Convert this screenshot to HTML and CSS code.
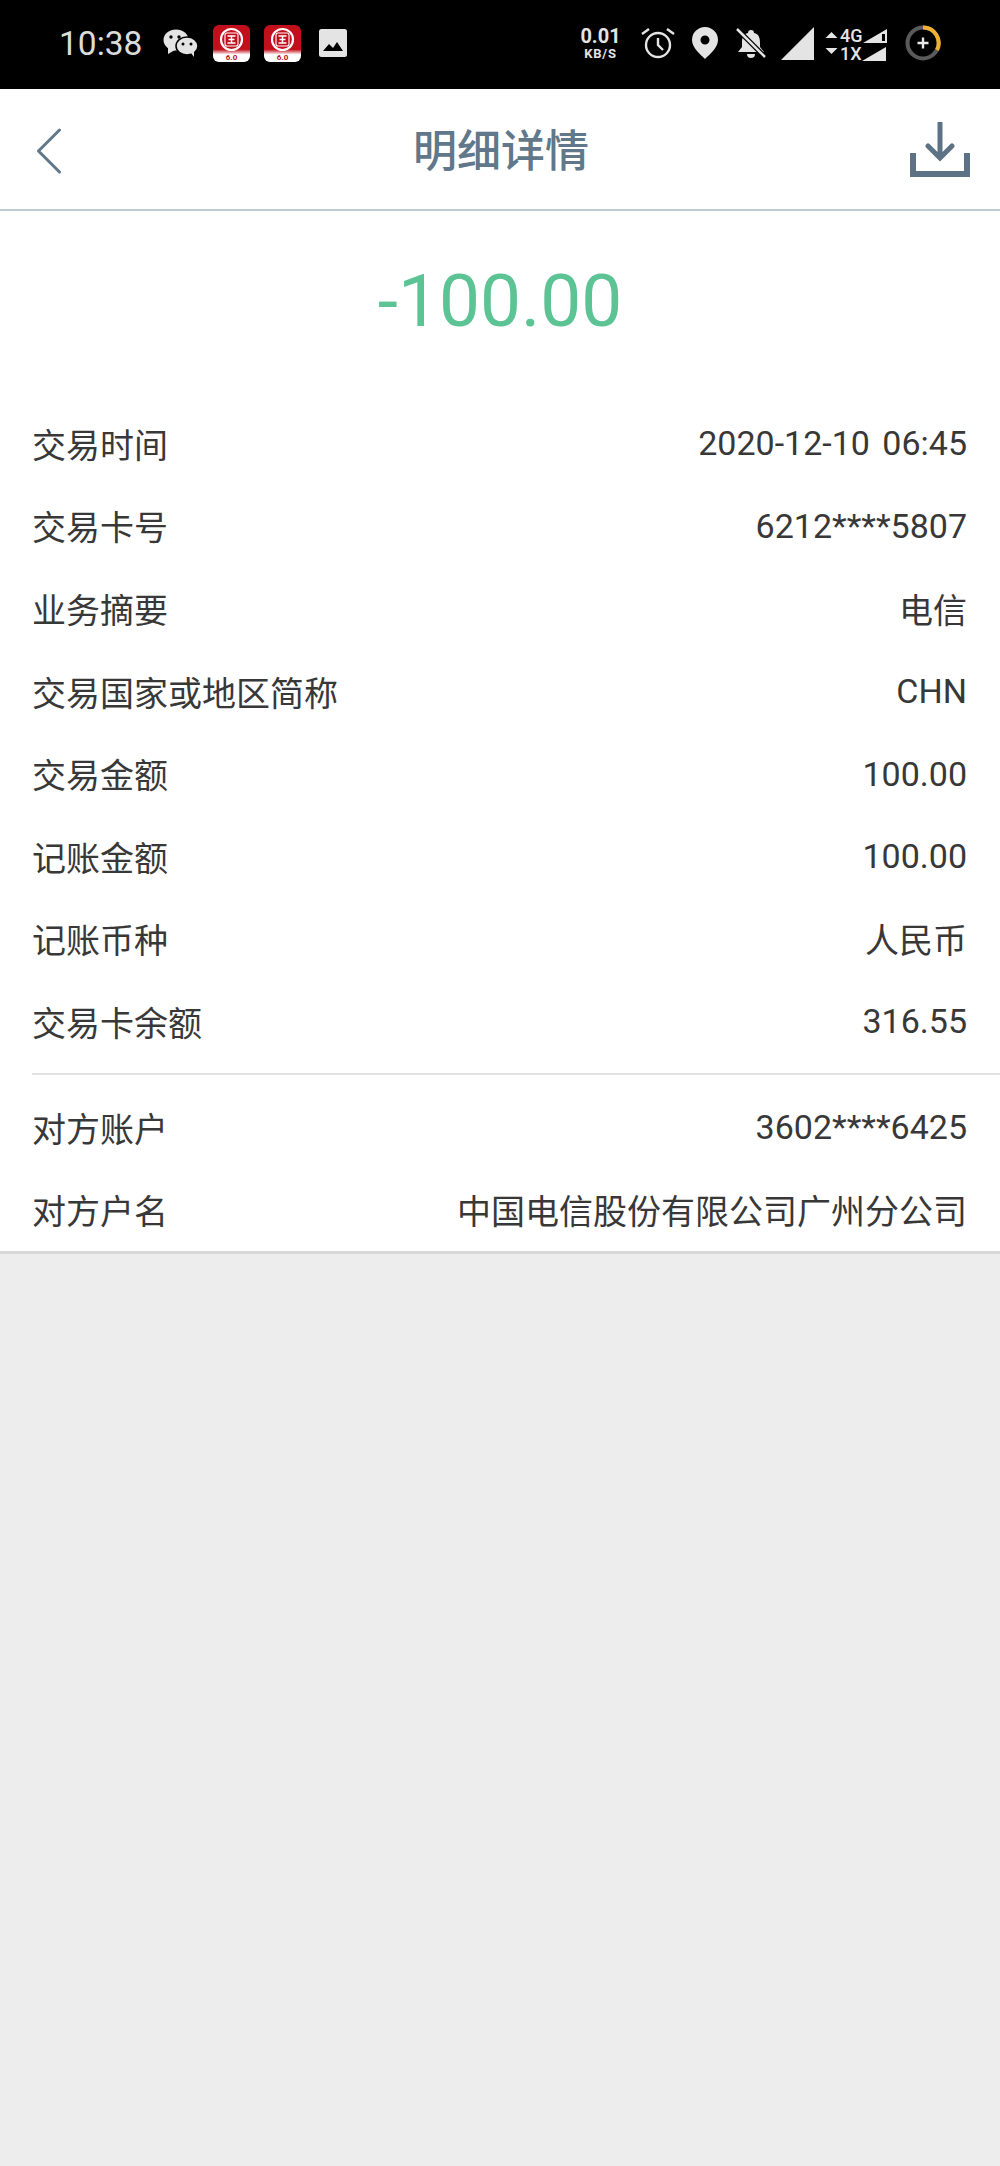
FILE: index.html
```html
<!DOCTYPE html>
<html lang="zh-CN">
<head>
<meta charset="utf-8">
<title>明细详情</title>
<link rel="stylesheet" href="styles.css">
</head>
<body>
<div class="status">
  <div class="status-left">
    <span class="clock">10:38</span>
    <svg class="ic-wechat" viewBox="0 0 35 28"><ellipse cx="13" cy="11" rx="12.500" ry="10.500" fill="#e4e4e4"/><path d="M5 18l0 7 7-4z" fill="#e4e4e4"/><ellipse cx="24" cy="17" rx="11" ry="9" fill="#e4e4e4" stroke="#000" stroke-width="1.500"/><path d="M28 24l3 4 0-6z" fill="#e4e4e4"/><circle cx="8" cy="8" r="1.700" fill="#000"/><circle cx="16" cy="8" r="1.700" fill="#000"/><circle cx="20" cy="15" r="1.500" fill="#000"/><circle cx="28" cy="15" r="1.500" fill="#000"/></svg>
    <svg class="ic-bank" viewBox="0 0 37 37"><defs><linearGradient id="g1" x1="0" y1="0" x2="0" y2="1"><stop offset="0.66" stop-color="#c10f1b"/><stop offset="0.8" stop-color="#fff"/></linearGradient></defs><rect width="37" height="37" rx="6" fill="url(#g1)"/><circle cx="18.500" cy="14.500" r="10.500" fill="none" stroke="#fff" stroke-width="2.200"/><rect x="12" y="8" width="13" height="13" rx="2" fill="none" stroke="#fff" stroke-width="1.100"/><path d="M14.500 11h8M14.500 18h8M18.500 11v7M15.500 14.500h6" stroke="#fff" stroke-width="1.500" fill="none"/><text x="18.500" y="35" class="bank-ver">6.0</text></svg>
    <svg class="ic-bank" viewBox="0 0 37 37"><rect width="37" height="37" rx="6" fill="url(#g1)"/><circle cx="18.500" cy="14.500" r="10.500" fill="none" stroke="#fff" stroke-width="2.200"/><rect x="12" y="8" width="13" height="13" rx="2" fill="none" stroke="#fff" stroke-width="1.100"/><path d="M14.500 11h8M14.500 18h8M18.500 11v7M15.500 14.500h6" stroke="#fff" stroke-width="1.500" fill="none"/><text x="18.500" y="35" class="bank-ver">6.0</text></svg>
    <svg class="ic-photo" viewBox="0 0 28 28"><rect width="28" height="28" rx="2.500" fill="#e4e4e4"/><path d="M4 22l6-7 4 4 4-6 6 9z" fill="#000"/></svg>
  </div>
  <div class="status-right">
    <div class="speed"><b>0.01</b><small>KB/S</small></div>
    <svg class="ic-alarm" viewBox="0 0 34 32"><circle cx="17" cy="18" r="12" fill="none" stroke="#e4e4e4" stroke-width="2.400"/><path d="M17 11v7l5 5M1 7l7-5M33 7l-7-5" fill="none" stroke="#e4e4e4" stroke-width="2.400"/></svg>
    <svg class="ic-pin" viewBox="0 0 26 32"><path fill-rule="evenodd" d="M13 0a13 13 0 0 1 13 13c0 8-9 15-13 19C9 28 0 21 0 13A13 13 0 0 1 13 0zm0 8.500a4.500 4.500 0 1 0 0 9 4.500 4.500 0 0 0 0-9z" fill="#e4e4e4"/></svg>
    <svg class="ic-bell" viewBox="0 0 30 30"><path d="M15 2a3 3 0 0 1 3 3c5 1 6 5 6 10v4l4 5H2l4-5v-4c0-5 1-9 6-10a3 3 0 0 1 3-3zM11 26h8a4 4 0 0 1-8 0z" fill="#e4e4e4"/><path d="M1 1l28 28" stroke="#000" stroke-width="5"/><path d="M1 1l28 28" stroke="#e4e4e4" stroke-width="2.500"/></svg>
    <svg class="ic-signal" viewBox="0 0 33 33"><path d="M33 0v33H0z" fill="#e4e4e4"/></svg>
    <div class="arrows"><svg class="ic-updown" viewBox="0 0 12 22"><path d="M6 0l6 6H0zM0 16h12l-6 6z" fill="#e4e4e4"/></svg></div>
    <div class="dual">
      <div class="dual-row"><span>4G</span><svg class="ic-mini" viewBox="0 0 24 14"><path fill-rule="evenodd" d="M24 0v14H0zM19 5v7h3V5z" fill="#e4e4e4"/></svg></div>
      <div class="dual-row"><span>1X</span><svg class="ic-mini" viewBox="0 0 24 14"><path d="M24 0v14H0z" fill="#e4e4e4"/></svg></div>
    </div>
    <svg class="ic-ring" viewBox="0 0 36 36"><circle cx="18" cy="18" r="15.500" fill="none" stroke="#5a5a5a" stroke-width="4"/><path d="M18 2.500A15.500 15.500 0 0 1 32 25" fill="none" stroke="#f0b030" stroke-width="4"/><path d="M18 12.500v11M12.500 18h11" stroke="#e8e8e8" stroke-width="2.400"/></svg>
  </div>
</div>

<header class="nav">
  <svg class="ic-back" viewBox="0 0 26 46"><path d="M24 2L3 23l21 21" fill="none" stroke="#60788a" stroke-width="3" stroke-linecap="round" stroke-linejoin="round"/></svg>
  <h1 class="nav-title">明细详情</h1>
  <svg class="ic-download" viewBox="0 0 60 56"><path d="M30 1v34M18 24l12 12 12-12" fill="none" stroke="#5d7284" stroke-width="5" stroke-linecap="round"/><path d="M3 31v21h54V31" fill="none" stroke="#5d7284" stroke-width="6"/></svg>
</header>

<main class="card">
  <div class="amount">-100.00</div>
  <div class="rows">
    <div class="row"><span>交易时间</span><span>2020-12-10 06:45</span></div>
    <div class="row"><span>交易卡号</span><span>6212****5807</span></div>
    <div class="row"><span>业务摘要</span><span>电信</span></div>
    <div class="row"><span>交易国家或地区简称</span><span>CHN</span></div>
    <div class="row"><span>交易金额</span><span>100.00</span></div>
    <div class="row"><span>记账金额</span><span>100.00</span></div>
    <div class="row"><span>记账币种</span><span>人民币</span></div>
    <div class="row"><span>交易卡余额</span><span>316.55</span></div>
  </div>
  <div class="rows rows-second">
    <div class="row"><span>对方账户</span><span>3602****6425</span></div>
    <div class="row"><span>对方户名</span><span>中国电信股份有限公司广州分公司</span></div>
  </div>
</main>
</body>
</html>
```
FILE: styles.css
```css
* { box-sizing: border-box; margin: 0; padding: 0; }
html, body { height: 100%; }
body {
  background: #ededed;
  font-family: Roboto, "Noto Sans CJK SC", sans-serif;
  overflow: hidden;
}
.status {
  height: 89px;
  background: #000;
  display: flex;
  justify-content: space-between;
  align-items: center;
  padding: 0 59px 3px 59px;
  color: #e4e4e4;
}
.status-left, .status-right { display: flex; align-items: center; }
.clock { font-size: 33.500px; color: #dcdcdc; margin-right: 21px; }
.ic-wechat { width: 35px; height: 28px; margin-right: 15px; }
.ic-bank { width: 37px; height: 37px; margin-right: 14px; }
.bank-ver { font-size: 8px; font-weight: 700; fill: #c10f1b; text-anchor: middle; }
.ic-photo { width: 28px; height: 28px; margin-left: 4px; }
.speed { display: flex; flex-direction: column; align-items: center; line-height: 1; margin-right: 22px; width: 37px; }
.speed b { font-size: 20px; font-weight: 700; }
.speed small { font-size: 13px; font-weight: 700; letter-spacing: 0.8px; margin-top: 1px; }
.ic-alarm { width: 34px; height: 32px; margin-right: 17px; }
.ic-pin { width: 26px; height: 32px; margin-right: 18px; }
.ic-bell { width: 30px; height: 30px; margin-right: 15px; }
.ic-signal { width: 33px; height: 33px; margin-right: 11px; }
.arrows { display: flex; margin-right: 2px; }
.ic-updown { width: 13px; height: 22px; }
.dual { display: flex; flex-direction: column; width: 44px; margin: 4px 21px 0 0; }
.dual-row { display: flex; align-items: flex-end; height: 18px; font-size: 18px; font-weight: 500; line-height: 18px; justify-content: space-between; }
.ic-mini { width: 24px; height: 14px; margin-bottom: 2px; flex: none; }
.ic-ring { width: 36px; height: 36px; }

.nav {
  height: 122px;
  background: #fff;
  border-bottom: 2px solid #bccbd4;
  display: grid;
  grid-template-columns: 1fr auto 1fr;
  align-items: center;
  padding: 6px 32px 0 34px;
}
.ic-back { width: 29px; height: 46px; margin-bottom: 2px; }
.nav-title {
  font-size: 44px;
  font-weight: 500;
  line-height: 1;
  color: #60788a;
}
.ic-download { width: 60px; height: 56px; justify-self: end; margin: 0 -2px 4px 0; }

.card {
  background: #fff;
  border-bottom: 3px solid #d8d8d8;
  padding-top: 1px;
}
.amount {
  height: 190px;
  padding-top: 46px;
  font-size: 73px;
  line-height: 86px;
  font-weight: 400;
  text-align: center;
  color: #5cc394;
}
.rows { margin-left: 32px; padding-right: 33px; }
.rows-second { border-top: 2px solid #e2e2e2; padding-top: 11px; margin-top: 10px; }
.row {
  height: 82.600px;
  display: flex;
  justify-content: space-between;
  align-items: center;
  font-size: 34px;
  word-spacing: 4px;
  color: #383838;
}
```
